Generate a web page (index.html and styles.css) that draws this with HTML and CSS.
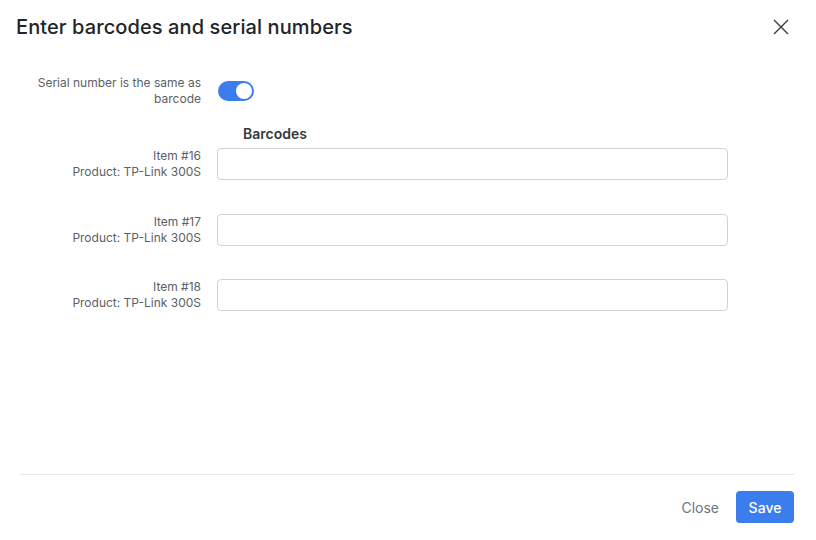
FILE: index.html
```html
<!DOCTYPE html>
<html>
<head>
<meta charset="utf-8">
<link rel="stylesheet" href="styles.css">
</head>
<body>
<div class="modal">
  <div class="modal-header">
    <h1 class="modal-title">Enter barcodes and serial numbers</h1>
    <button class="close-x" aria-label="Close">
      <svg width="16" height="16" viewBox="0 0 16 16"><path d="M1 1L15 15M15 1L1 15" stroke="#3a3a3a" stroke-width="1.4" fill="none"/></svg>
    </button>
  </div>
  <div class="modal-body">
    <div class="row toggle-row">
      <div class="label">Serial number is the same as barcode</div>
      <div class="switch"><span class="knob"></span></div>
    </div>
    <div class="col-head">Barcodes</div>
    <div class="row">
      <div class="label">Item #16<br>Product: TP-Link 300S</div>
      <input class="field" type="text">
    </div>
    <div class="row">
      <div class="label">Item #17<br>Product: TP-Link 300S</div>
      <input class="field" type="text">
    </div>
    <div class="row">
      <div class="label">Item #18<br>Product: TP-Link 300S</div>
      <input class="field" type="text">
    </div>
  </div>
  <div class="modal-footer">
    <button class="btn btn-link">Close</button>
    <button class="btn btn-primary">Save</button>
  </div>
</div>
</body>
</html>
```
FILE: styles.css
```css
html, body {
  margin: 0;
  padding: 0;
  height: 540px;
  background: #fff;
  font-family: Inter, "Noto Sans", sans-serif;
}
.modal {
  height: 540px;
  display: flex;
  flex-direction: column;
}
.modal-header {
  display: flex;
  justify-content: space-between;
  align-items: flex-start;
  padding: 15px 27px 0 16px;
}
.modal-title {
  margin: 0;
  font-size: 20px;
  line-height: 24px;
  font-weight: 500;
  letter-spacing: 0.1px;
  color: #212529;
}
.close-x {
  border: 0;
  background: none;
  padding: 0;
  margin-top: 4px;
  width: 16px;
  height: 16px;
  display: block;
}
.close-x svg { display: block; }
.modal-body {
  flex: 1;
  padding: 36px 0 0 20px;
}
.row {
  display: flex;
  align-items: center;
  gap: 16px;
  margin-bottom: 33.5px;
}
.toggle-row {
  margin-bottom: 0;
}
.label {
  width: 181px;
  flex: none;
  text-align: right;
  font-size: 12px;
  line-height: 16px;
  color: #5c5f63;
}
.toggle-row .label {
  padding-left: 12px;
  width: 169px;
}
.switch {
  width: 36px;
  height: 20px;
  border-radius: 10px;
  background: #3b7ded;
  position: relative;
  margin-left: 1px;
}
.knob {
  position: absolute;
  right: 2px;
  top: 2px;
  width: 16px;
  height: 16px;
  border-radius: 50%;
  background: #fff;
}
.col-head {
  margin: 18px 0 5px 223px;
  font-size: 14px;
  line-height: 18px;
  font-weight: 600;
  color: #343a40;
}
.field {
  box-sizing: border-box;
  width: 511px;
  height: 32px;
  border: 1px solid #ced4da;
  border-radius: 4px;
  margin: 0;
  padding: 0 10px;
  background: #fff;
}
.modal-footer {
  margin: 0 22px 0 20px;
  border-top: 1px solid #e5e7ea;
  padding: 16px 0 17px;
  display: flex;
  justify-content: flex-end;
  gap: 5px;
}
.btn {
  height: 32px;
  border-radius: 4px;
  border: 0;
  font-family: Inter, "Noto Sans", sans-serif;
  font-size: 14px;
  font-weight: 500;
  padding: 0 12px;
  cursor: pointer;
}
.btn-link {
  background: none;
  color: #6c757d;
  font-weight: 400;
}
.btn-primary {
  background: #3b7ded;
  color: #fff;
  width: 58px;
  padding: 0;
}
```
